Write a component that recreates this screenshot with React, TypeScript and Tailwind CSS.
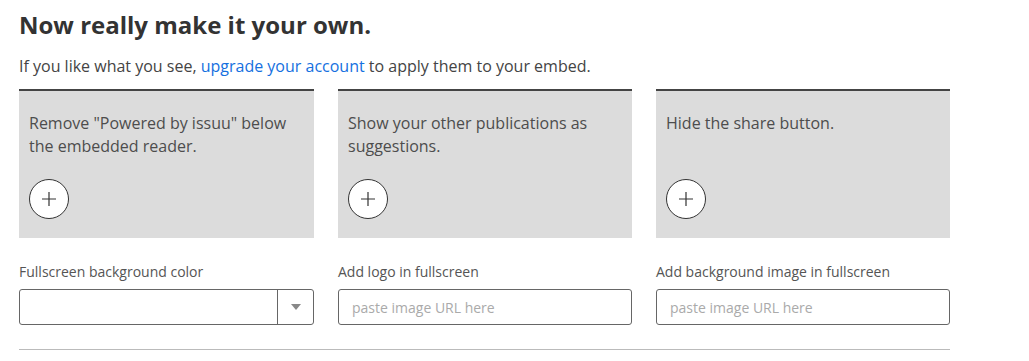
import React from "react";

function Plus() {
  return (
    <div className="w-[40px] h-[40px] rounded-full border border-[#333] bg-white flex items-center justify-center">
      <svg width="16" height="16" viewBox="0 0 16 16">
        <path d="M8 1v14M1 8h14" stroke="#333" strokeWidth="1.2" />
      </svg>
    </div>
  );
}

function Card({ text }: { text: string }) {
  return (
    <div className="bg-[#dcdcdc] border-t-2 border-[#444] h-[149px] px-[10px] pt-[21px] flex flex-col">
      <p className="text-[16px] leading-[23px] text-[#4d4d4d] h-[67px]">{text}</p>
      <Plus />
    </div>
  );
}

export default function App() {
  return (
    <div className="bg-white w-[1029px] h-[361px] px-[19px] pt-[9px] font-['Open_Sans',sans-serif]">
      <h1 className="text-[24px] font-bold text-[#333] leading-[32px]">Now really make it your own.</h1>
      <p className="mt-[13px] text-[16px] leading-[24px] text-[#444]">
        If you like what you see, <a className="text-[#1570e0]">upgrade your account</a> to apply them to your embed.
      </p>
      <div className="w-[931px] mt-[11px] grid grid-cols-[295px_294px_294px] gap-x-[24px]">
        <Card text={'Remove "Powered by issuu" below the embedded reader.'} />
        <Card text="Show your other publications as suggestions." />
        <Card text="Hide the share button." />
        <div className="mt-[24px]">
          <div className="text-[14px] leading-[20px] text-[#555]">Fullscreen background color</div>
          <div className="mt-[7px] h-[36px] border border-[#666] rounded-[3px] flex">
            <div className="flex-1" />
            <div className="w-[36px] border-l border-[#666] flex items-center justify-center">
              <svg width="10" height="6" viewBox="0 0 10 6"><path d="M0 0h10L5 6z" fill="#888" /></svg>
            </div>
          </div>
        </div>
        <div className="mt-[24px]">
          <div className="text-[14px] leading-[20px] text-[#555]">Add logo in fullscreen</div>
          <input
            className="mt-[7px] w-full h-[36px] border border-[#666] rounded-[3px] px-[13px] text-[14px] text-[#555] placeholder:text-[#aaa] outline-none"
            placeholder="paste image URL here"
          />
        </div>
        <div className="mt-[24px]">
          <div className="text-[14px] leading-[20px] text-[#555]">Add background image in fullscreen</div>
          <input
            className="mt-[7px] w-full h-[36px] border border-[#666] rounded-[3px] px-[13px] text-[14px] text-[#555] placeholder:text-[#aaa] outline-none"
            placeholder="paste image URL here"
          />
        </div>
      </div>
      <div className="w-[931px] mt-[24px] border-t border-[#bbb]" />
    </div>
  );
}
